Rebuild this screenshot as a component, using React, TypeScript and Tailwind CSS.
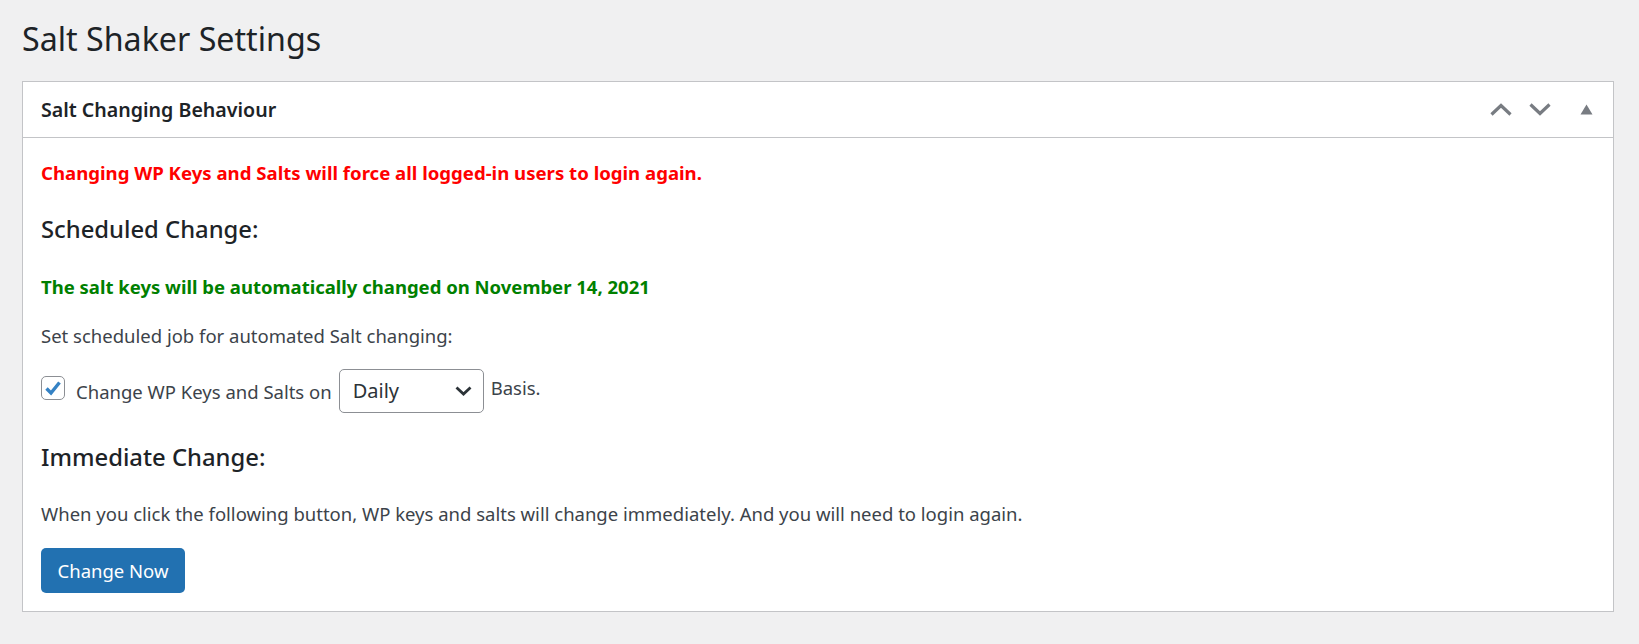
import React from "react";

const font = { fontFamily: '"Noto Sans", "Open Sans", sans-serif' };

function ChevronUp() {
  return (
    <svg width="22" height="13" viewBox="0 0 22 13">
      <polyline points="1.5,11.5 11,2.5 20.5,11.5" fill="none" stroke="#787c82" strokeWidth="3.2" />
    </svg>
  );
}
function ChevronDown() {
  return (
    <svg width="22" height="13" viewBox="0 0 22 13">
      <polyline points="1.5,1.5 11,10.5 20.5,1.5" fill="none" stroke="#787c82" strokeWidth="3.2" />
    </svg>
  );
}
function Triangle() {
  return (
    <svg width="13" height="11" viewBox="0 0 13 11">
      <polygon points="6.5,0.5 12.5,10.5 0.5,10.5" fill="#787c82" />
    </svg>
  );
}

export default function App() {
  return (
    <div className="min-h-[644px] bg-[#f0f0f1] pl-[22px] pr-[25px]" style={font}>
      <h1 className="pt-[16px] text-[32.2px] leading-[46px] font-normal text-[#1d2327]">Salt Shaker Settings</h1>
      <div className="mt-[19px] border border-[#c3c4c7] bg-white">
        <div className="flex h-[56px] items-center justify-between border-b border-[#c3c4c7] pl-[18px]">
          <h2 className="text-[19.6px] leading-[28px] font-semibold text-[#1d2327]">Salt Changing Behaviour</h2>
          <div className="flex h-full items-center">
            <div className="flex w-[39px] justify-center"><ChevronUp /></div>
            <div className="flex w-[39px] justify-center"><ChevronDown /></div>
            <div className="flex w-[54px] justify-center"><Triangle /></div>
          </div>
        </div>
        <div className="px-[18px] pt-[21px] pb-[18px] text-[18.5px] leading-[27px] text-[#3c434a]">
          <p className="text-[18.6px] font-bold text-[#ff0000]">Changing WP Keys and Salts will force all logged-in users to login again.</p>
          <h3 className="mt-[26px] text-[23.8px] leading-[34px] font-medium text-[#1d2327]">Scheduled Change:</h3>
          <p className="mt-[27px] font-bold text-[#008000]">The salt keys will be automatically changed on November 14, 2021</p>
          <p className="mt-[22px]">Set scheduled job for automated Salt changing:</p>
          <div className="mt-[20px] flex items-start">
            <div className="mt-[7px] flex h-[24px] w-[24px] items-center justify-center rounded-[5px] border border-[#8c8f94] bg-white">
              <svg width="20" height="20" viewBox="0 0 20 20">
                <path d="M3.5 10.5 L8 15 L16.5 4.5" fill="none" stroke="#3582c4" strokeWidth="3.4" strokeLinecap="butt" strokeLinejoin="miter" />
              </svg>
            </div>
            <span className="ml-[11px] mt-[9px]">Change WP Keys and Salts on</span>
            <div className="ml-[7px] flex h-[44px] w-[145px] items-center justify-between rounded-[5px] border border-[#8c8f94] bg-white pl-[13px] pr-[11px]">
              <span className="text-[20px] leading-[28px] text-[#2c3338]">Daily</span>
              <svg width="17" height="10" viewBox="0 0 17 10">
                <polyline points="1.5,1.5 8.5,8 15.5,1.5" fill="none" stroke="#2c3338" strokeWidth="2.8" />
              </svg>
            </div>
            <span className="ml-[7px] mt-[5px]">Basis.</span>
          </div>
          <h3 className="mt-[27px] text-[23.8px] leading-[34px] font-medium text-[#1d2327]">Immediate Change:</h3>
          <p className="mt-[26px]">When you click the following button, WP keys and salts will change immediately. And you will need to login again.</p>
          <button className="mt-[21px] flex h-[45px] w-[144px] items-center justify-center rounded-[5px] bg-[#2271b1] text-[18.5px] text-white">
            Change Now
          </button>
        </div>
      </div>
    </div>
  );
}
